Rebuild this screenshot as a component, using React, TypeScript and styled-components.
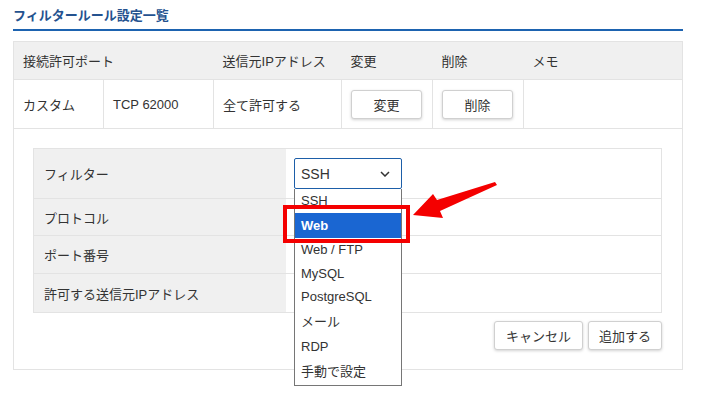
import React from "react";
import styled, { createGlobalStyle } from "styled-components";

const GlobalStyle = createGlobalStyle`
  body {
    margin: 0;
    background: #fff;
    font-family: "Liberation Sans", "Noto Sans CJK JP", sans-serif;
    font-size: 13px;
    color: #333;
  }
`;

const Page = styled.div`
  width: 670px;
  min-height: 399px;
  box-sizing: content-box;
  padding: 7px 22px 0 13px;
`;

const Title = styled.h2`
  margin: 0;
  font-size: 13px;
  font-weight: bold;
  color: #24528f;
  height: 22px;
  line-height: 18px;
  border-bottom: 2px solid #1d63b0;
`;

const Table = styled.table`
  margin-top: 10px;
  width: 100%;
  border-collapse: collapse;
  border: 1px solid #e3e3e3;
  table-layout: fixed;
`;

const HeadCell = styled.th`
  background: #f0f0f0;
  font-weight: normal;
  text-align: left;
  height: 37px;
  padding: 0 9px;
  border-bottom: 1px solid #e3e3e3;
`;

const Cell = styled.td`
  height: 48px;
  padding: 0 9px;
  border-right: 1px solid #e3e3e3;
  &:last-child {
    border-right: none;
  }
`;

const Button = styled.button<{ $w: number }>`
  width: ${({ $w }) => $w}px;
  height: 29px;
  background: #fff;
  border: 1px solid #d0d0d0;
  border-radius: 3px;
  box-shadow: 0 1px 3px rgba(0, 0, 0, 0.18);
  font-family: inherit;
  font-size: 13px;
  color: #333;
  padding: 0;
`;

const FormPanel = styled.div`
  border: 1px solid #e3e3e3;
  border-top: none;
  padding: 19px 20px 19px 19px;
`;

const FormTable = styled.table`
  width: 100%;
  border-collapse: collapse;
  border: 1px solid #e3e3e3;
  table-layout: fixed;
`;

const Label = styled.th<{ $h: number }>`
  width: 232px;
  height: ${({ $h }) => $h}px;
  background: #f0f0f0;
  font-weight: normal;
  text-align: left;
  padding: 0 10px;
  border-bottom: 1px solid #e3e3e3;
`;

const Value = styled.td`
  padding: 0 8px;
  border-bottom: 1px solid #e3e3e3;
`;

const SelectWrap = styled.div`
  position: relative;
  width: 108px;
`;

const SelectBox = styled.div`
  box-sizing: border-box;
  height: 31px;
  border: 1px solid #1d5ea8;
  border-radius: 2px;
  display: flex;
  align-items: center;
  justify-content: space-between;
  padding: 0 11px 0 6px;
  font-size: 14px;
`;

const DropList = styled.ul`
  position: absolute;
  top: 31px;
  left: 0;
  width: 108px;
  box-sizing: border-box;
  margin: 0;
  padding: 0;
  list-style: none;
  background: #fff;
  border: 1px solid #767676;
  border-top: none;
  z-index: 2;
`;

const Option = styled.li<{ $h: number; $active?: boolean }>`
  height: ${({ $h }) => $h}px;
  line-height: ${({ $h }) => $h}px;
  padding: 0 6px;
  background: ${({ $active }) => ($active ? "#1a66d2" : "transparent")};
  color: ${({ $active }) => ($active ? "#fff" : "#333")};
  font-weight: ${({ $active }) => ($active ? "bold" : "normal")};
  white-space: nowrap;
`;

const Highlight = styled.div`
  position: absolute;
  left: -11px;
  top: 47px;
  width: 127px;
  height: 38px;
  box-sizing: border-box;
  border: 4px solid #f40000;
  z-index: 3;
`;

const Arrow = styled.svg`
  position: absolute;
  left: 116px;
  top: 20px;
  z-index: 3;
`;

const Actions = styled.div`
  display: flex;
  justify-content: flex-end;
  gap: 5px;
  margin-top: 8px;
`;

const options: [string, number][] = [
  ["SSH", 24],
  ["Web", 25],
  ["Web / FTP", 24],
  ["MySQL", 23],
  ["PostgreSQL", 24],
  ["メール", 26],
  ["RDP", 24],
  ["手動で設定", 26],
];

export default function App() {
  return (
    <Page>
      <GlobalStyle />
      <Title>フィルタールール設定一覧</Title>
      <Table>
        <colgroup>
          <col style={{ width: 90 }} />
          <col style={{ width: 110 }} />
          <col style={{ width: 128 }} />
          <col style={{ width: 91 }} />
          <col style={{ width: 91 }} />
          <col />
        </colgroup>
        <thead>
          <tr>
            <HeadCell colSpan={2}>接続許可ポート</HeadCell>
            <HeadCell>送信元IPアドレス</HeadCell>
            <HeadCell>変更</HeadCell>
            <HeadCell>削除</HeadCell>
            <HeadCell>メモ</HeadCell>
          </tr>
        </thead>
        <tbody>
          <tr>
            <Cell>カスタム</Cell>
            <Cell>TCP 62000</Cell>
            <Cell>全て許可する</Cell>
            <Cell>
              <Button $w={71}>変更</Button>
            </Cell>
            <Cell>
              <Button $w={71}>削除</Button>
            </Cell>
            <Cell />
          </tr>
        </tbody>
      </Table>
      <FormPanel>
        <FormTable>
          <tbody>
            <tr>
              <Label $h={49}>フィルター</Label>
              <Value>
                <SelectWrap>
                  <SelectBox>
                    <span>SSH</span>
                    <svg width="10" height="6" viewBox="0 0 10 6">
                      <path d="M1 1l4 4 4-4" fill="none" stroke="#333" strokeWidth="1.5" />
                    </svg>
                  </SelectBox>
                  <DropList>
                    {options.map(([name, h]) => (
                      <Option key={name} $h={h} $active={name === "Web"}>
                        {name}
                      </Option>
                    ))}
                  </DropList>
                  <Highlight />
                  <Arrow width="92" height="44" viewBox="0 0 92 44">
                    <polygon
                      points="3,37 23,16 27,22 85,4 87,7 30,33 33,40"
                      fill="#f40000"
                    />
                  </Arrow>
                </SelectWrap>
              </Value>
            </tr>
            <tr>
              <Label $h={36}>プロトコル</Label>
              <Value />
            </tr>
            <tr>
              <Label $h={37}>ポート番号</Label>
              <Value />
            </tr>
            <tr>
              <Label $h={38}>許可する送信元IPアドレス</Label>
              <Value />
            </tr>
          </tbody>
        </FormTable>
        <Actions>
          <Button $w={89}>キャンセル</Button>
          <Button $w={74}>追加する</Button>
        </Actions>
      </FormPanel>
    </Page>
  );
}
